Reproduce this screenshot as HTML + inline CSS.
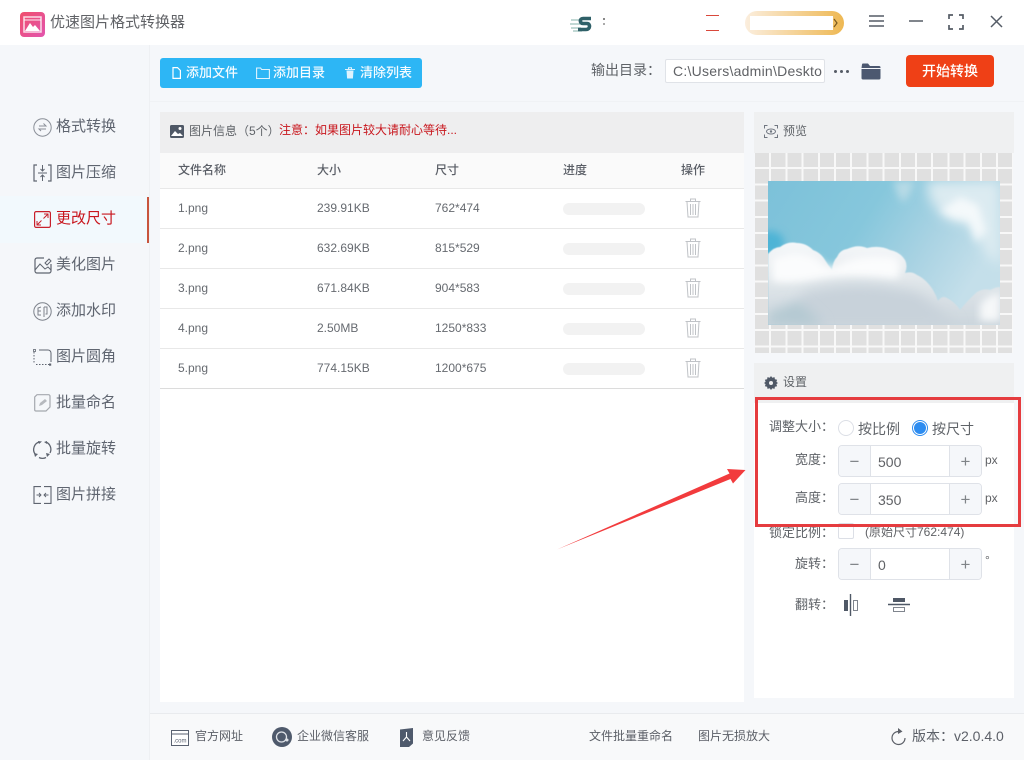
<!DOCTYPE html>
<html lang="zh-CN"><head><meta charset="utf-8"><title>优速图片格式转换器</title>
<style>
*{box-sizing:border-box;margin:0;padding:0}
html,body{width:1024px;height:760px;overflow:hidden;background:#f5f7fa}
body{position:relative;font-family:"Liberation Sans","Noto Sans CJK SC",sans-serif;color:#606266}
.a{position:absolute}
.t{position:absolute;white-space:nowrap;line-height:20px}
svg{position:absolute;overflow:visible}
.nav{font-size:15px;left:56px;color:#5f6570}
.th{font-size:12px;color:#5a5e66;font-weight:500}
.td{font-size:12px;color:#666a70}
.bar{position:absolute;left:563px;width:82px;height:12px;background:#f2f2f2;border-radius:6px}
.line{position:absolute;left:160px;width:584px;height:1px;background:#e8e8e8}
.lb{font-size:13px;color:#5f6368}
.l4{left:769px}.l2{left:795px}
.spin{position:absolute;left:838px;width:144px;height:32px;border:1px solid #dfe2e8;border-radius:4px;background:#fff;overflow:hidden}
.spin i{position:absolute;top:0;width:32px;height:30px;background:#f5f7fa;font-style:normal;text-align:center;line-height:31px;font-size:17px;color:#808488}
.spin i.m{left:0;border-right:1px solid #dfe2e8}
.spin i.p{right:0;border-left:1px solid #dfe2e8}
.spin b{position:absolute;left:39px;top:6px;font-weight:400;font-size:14px;line-height:20px;color:#606266}
.ft{font-size:12px;color:#5c6068}
</style></head><body>

<!-- title bar -->
<div class="a" style="left:0;top:0;width:1024px;height:45px;background:#fff"></div>
<div class="a" style="left:20px;top:12px;width:25px;height:25px;border-radius:4px;background:linear-gradient(135deg,#f04e6c,#e255ae)"></div>
<svg style="left:20px;top:12px" width="25" height="25" viewBox="0 0 25 25"><rect x="4" y="5" width="17" height="15" fill="none" stroke="#fff" stroke-width="1.5" opacity=".8"/><path d="M4 8h17" stroke="#fff" stroke-width="1.5" opacity=".6"/><path d="M5 19l5-8 3 4 2-2 5 6z" fill="#fff"/></svg>
<div class="t" style="left:50px;top:13px;font-size:15px;color:#606266">优速图片格式转换器</div>

<svg style="left:570px;top:15px" width="24" height="18" viewBox="0 0 24 18"><path d="M1 5h9M0 9h10M1 13h10M3 16h9" stroke="#9cc0bb" stroke-width="1.200"/><path d="M21 3.500H13c-3.500 0-3.500 5 0 5h4c3.500 0 3.500 6-1 6H8" fill="none" stroke="#2f6068" stroke-width="3.600"/></svg>
<div class="a" style="left:603px;top:18px;width:2px;height:2px;background:#888"></div>
<div class="a" style="left:603px;top:23px;width:2px;height:2px;background:#aaa"></div>
<div class="a" style="left:706px;top:15px;width:13px;height:1px;background:#d9483b"></div>
<div class="a" style="left:706px;top:30px;width:13px;height:1px;background:#d9483b"></div>
<div class="a" style="left:745px;top:11px;width:99px;height:24px;border-radius:12px;background:linear-gradient(90deg,#fbeede,#eeb853)"></div>
<div class="a" style="left:750px;top:16px;width:83px;height:14px;background:#fff"></div>
<svg style="left:833px;top:18px" width="5" height="10" viewBox="0 0 5 10"><path d="M1 1l3 4-3 4" fill="none" stroke="#7a5a20" stroke-width="1.200"/></svg>
<svg style="left:869px;top:15px" width="16" height="12" viewBox="0 0 16 12"><path d="M0 1h15M0 6h15M0 11h15" stroke="#555c66" stroke-width="1.500"/></svg>
<svg style="left:909px;top:20px" width="14" height="2"><path d="M0 1h14" stroke="#555c66" stroke-width="1.500"/></svg>
<svg style="left:948px;top:14px" width="16" height="16" viewBox="0 0 16 16"><path d="M1 5V1h4M11 1h4v4M15 11v4h-4M5 15H1v-4" fill="none" stroke="#555c66" stroke-width="1.700"/></svg>
<svg style="left:990px;top:15px" width="13" height="13" viewBox="0 0 13 13"><path d="M1 1l11 11M12 1L1 12" stroke="#555c66" stroke-width="1.500"/></svg>

<!-- sidebar -->
<div class="a" style="left:149px;top:45px;width:1px;height:715px;background:#eef0f3"></div>
<div class="a" style="left:0;top:196px;width:149px;height:47px;background:#f2f9fd"></div>
<div class="a" style="left:147px;top:197px;width:2px;height:46px;background:#c8553d"></div>

<svg style="left:33px;top:118px" width="19" height="19" viewBox="0 0 19 19"><circle cx="9.500" cy="9.500" r="8.700" fill="none" stroke="#8a8f98"/><path d="M6 8h7L10.500 5.500M13 11H6L8 13" fill="none" stroke="#8a8f98"/></svg>
<div class="t nav" style="top:117px">格式转换</div>
<svg style="left:33px;top:164px" width="19" height="18" viewBox="0 0 19 18"><path d="M4 1H1v16h3M15 1h3v16h-3" fill="none" stroke="#5f6570" stroke-width="1.200"/><path d="M9.500 1v6M7.500 5l2 2 2-2M9.500 17v-6M7.500 13l2-2 2 2M5 9h9" fill="none" stroke="#5f6570"/></svg>
<div class="t nav" style="top:163px">图片压缩</div>
<svg style="left:34px;top:211px" width="17" height="17" viewBox="0 0 17 17"><rect x=".6" y=".6" width="15.800" height="15.800" rx="1.500" fill="none" stroke="#c8202c" stroke-width="1.200"/><path d="M10 3h4v4M14 3L9.500 7.500M7 14H3v-4M3 14l4.500-4.500" fill="none" stroke="#c8202c"/></svg>
<div class="t nav" style="top:209px;color:#c8161d">更改尺寸</div>
<svg style="left:34px;top:257px" width="18" height="17" viewBox="0 0 18 17"><path d="M10 1H3a2 2 0 0 0-2 2v11a2 2 0 0 0 2 2h12a2 2 0 0 0 2-2V7" fill="none" stroke="#5f6570" stroke-width="1.200"/><path d="M1 13l5-6 5 5 3-2 3 3M11 6l4-4 2 2-4 4z" fill="none" stroke="#5f6570"/></svg>
<div class="t nav" style="top:255px">美化图片</div>
<svg style="left:33px;top:302px" width="19" height="19" viewBox="0 0 19 19"><circle cx="9.500" cy="9.500" r="8.700" fill="none" stroke="#7d828b"/><path d="M8 5L5 6v7h3M5 9h3M11 5h3v7h-1.500M11 5v10" fill="none" stroke="#7d828b"/></svg>
<div class="t nav" style="top:301px">添加水印</div>
<svg style="left:33px;top:349px" width="19" height="17" viewBox="0 0 19 17"><path d="M1 3v12" stroke="#5f6570" stroke-dasharray="1.500 1.500"/><path d="M3 15.500h13" stroke="#5f6570" stroke-dasharray="1.500 1.500"/><path d="M6 1h9a3 3 0 0 1 3 3v9" fill="none" stroke="#5f6570"/><rect x=".5" y=".5" width="2" height="2" fill="none" stroke="#5f6570" stroke-width=".8"/><rect x="16" y="14.500" width="2.200" height="2.200" fill="#5f6570"/></svg>
<div class="t nav" style="top:347px">图片圆角</div>
<svg style="left:34px;top:394px" width="17" height="18" viewBox="0 0 17 18"><path d="M3 .7h11.500a1.500 1.500 0 0 1 1.500 1.500V13l-4 4H2a1.300 1.300 0 0 1-1.300-1.300V3z" fill="none" stroke="#a5a8ae" stroke-width="1.200"/><path d="M5 12l1-3 5-4 2 2-5 4z" fill="#b6b9be"/></svg>
<div class="t nav" style="top:393px">批量命名</div>
<svg style="left:33px;top:440px" width="19" height="19" viewBox="0 0 19 19"><path d="M6 2A8 8 0 0 0 2 14M6 17.500a8 8 0 0 0 7 0M17 13A8 8 0 0 0 13 2" fill="none" stroke="#5f6570" stroke-width="1.300"/><path d="M5 1l4 .5L6 4zM1 13l4 1-3 3zM14 17l-1-4 4 1zM14 1v3l-3-2z" fill="#5f6570"/></svg>
<div class="t nav" style="top:439px">批量旋转</div>
<svg style="left:33px;top:486px" width="19" height="18" viewBox="0 0 19 18"><path d="M8 .6H1v16.800h7M11 .6h7v16.800h-7" fill="none" stroke="#5f6570" stroke-width="1.100"/><path d="M3.500 9H8M6 7l2 2-2 2M15.500 9H11M13 7l-2 2 2 2" fill="none" stroke="#5f6570" stroke-width=".9"/></svg>
<div class="t nav" style="top:485px">图片拼接</div>

<!-- toolbar -->
<div class="a" style="left:150px;top:101px;width:874px;height:1px;background:#f0f2f5"></div>
<div class="a" style="left:160px;top:58px;width:262px;height:30px;background:#2db6f5;border-radius:3px"></div>
<svg style="left:172px;top:67px" width="9" height="12" viewBox="0 0 9 12"><path d="M1 .6h4.500L8.400 3.500V11.400H1z" fill="none" stroke="#fff" stroke-width="1.200"/></svg>
<div class="t" style="left:186px;top:63px;font-size:13px;color:#f4fbff;font-weight:500">添加文件</div>
<svg style="left:256px;top:67px" width="14" height="12" viewBox="0 0 14 12"><path d="M.6 1h4l1 1.500h7.800v9H.6z" fill="none" stroke="#dff3fe" stroke-width="1.100"/></svg>
<div class="t" style="left:273px;top:63px;font-size:13px;color:#f4fbff;font-weight:500">添加目录</div>
<svg style="left:345px;top:67px" width="10" height="12" viewBox="0 0 10 12"><path d="M0 2.500h10M3.500 2V.8h3V2" stroke="#dff3fe" fill="none"/><path d="M1.500 3.500h7l-.6 8H2.100z" fill="#dff3fe"/></svg>
<div class="t" style="left:360px;top:63px;font-size:13px;color:#f4fbff;font-weight:500">清除列表</div>

<div class="t" style="left:591px;top:60px;font-size:14px;color:#5f6368">输出目录：</div>
<div class="a" style="left:665px;top:59px;width:160px;height:24px;background:#fff;border:1px solid #e0e3e8;border-radius:2px"></div>
<div class="t" style="left:673px;top:61px;font-size:14px;color:#606266;letter-spacing:.25px">C:\Users\admin\Deskto</div>
<div class="a" style="left:834px;top:70px;width:3px;height:3px;border-radius:50%;background:#555c66;box-shadow:6px 0 #555c66,12px 0 #555c66"></div>
<svg style="left:861px;top:63px" width="20" height="17" viewBox="0 0 20 17"><path d="M1 1.500a1 1 0 0 1 1-1h5l2 2.500h9a1.500 1.500 0 0 1 1.500 1.500V5H.5z" fill="#4c5870"/><path d="M.5 6h19v9a1.500 1.500 0 0 1-1.500 1.500H2A1.500 1.500 0 0 1 .5 15z" fill="#4c5870"/></svg>
<div class="a" style="left:906px;top:55px;width:88px;height:32px;background:#ef4016;border-radius:4px"></div>
<div class="t" style="left:922px;top:61px;font-size:14px;color:#fff;font-weight:500">开始转换</div>

<!-- list panel -->
<div class="a" style="left:160px;top:112px;width:584px;height:41px;background:#eeeeef"></div>
<svg style="left:170px;top:125px" width="14" height="13" viewBox="0 0 14 13"><rect width="14" height="13" rx="1.500" fill="#4f5866"/><circle cx="10" cy="3.500" r="1.500" fill="#fff"/><path d="M1 11l4-5 3 3 2-1 3 3z" fill="#fff"/></svg>
<div class="t" style="left:189px;top:121px;font-size:12px;color:#5f6368">图片信息（5个）</div>
<div class="t" style="left:279px;top:120px;font-size:12px;color:#c8161d">注意：如果图片较大请耐心等待...</div>
<div class="a" style="left:160px;top:153px;width:584px;height:35px;background:#fafafa"></div>
<div class="a" style="left:160px;top:188px;width:584px;height:514px;background:#fff"></div>
<div class="line" style="top:188px"></div><div class="line" style="top:228px"></div><div class="line" style="top:268px"></div><div class="line" style="top:308px"></div><div class="line" style="top:348px"></div><div class="line" style="top:388px;background:#dcdcdc"></div>
<div class="t th" style="left:178px;top:160px">文件名称</div><div class="t th" style="left:317px;top:160px">大小</div><div class="t th" style="left:435px;top:160px">尺寸</div><div class="t th" style="left:563px;top:160px">进度</div><div class="t th" style="left:681px;top:160px">操作</div>

<div class="t td" style="left:178px;top:198px">1.png</div><div class="t td" style="left:317px;top:198px">239.91KB</div><div class="t td" style="left:435px;top:198px">762*474</div><div class="bar" style="top:203px"></div>
<div class="t td" style="left:178px;top:238px">2.png</div><div class="t td" style="left:317px;top:238px">632.69KB</div><div class="t td" style="left:435px;top:238px">815*529</div><div class="bar" style="top:243px"></div>
<div class="t td" style="left:178px;top:278px">3.png</div><div class="t td" style="left:317px;top:278px">671.84KB</div><div class="t td" style="left:435px;top:278px">904*583</div><div class="bar" style="top:283px"></div>
<div class="t td" style="left:178px;top:318px">4.png</div><div class="t td" style="left:317px;top:318px">2.50MB</div><div class="t td" style="left:435px;top:318px">1250*833</div><div class="bar" style="top:323px"></div>
<div class="t td" style="left:178px;top:358px">5.png</div><div class="t td" style="left:317px;top:358px">774.15KB</div><div class="t td" style="left:435px;top:358px">1200*675</div><div class="bar" style="top:363px"></div>

<svg style="left:685px;top:198px" width="16" height="20" viewBox="0 0 16 20"><path d="M.5 3.500h15M5.500 3V1h5v2M2 4l1 15h10l1-15M5.500 6v11M8 6v11M10.500 6v11" fill="none" stroke="#c0c3c7"/></svg>
<svg style="left:685px;top:238px" width="16" height="20" viewBox="0 0 16 20"><path d="M.5 3.500h15M5.500 3V1h5v2M2 4l1 15h10l1-15M5.500 6v11M8 6v11M10.500 6v11" fill="none" stroke="#c0c3c7"/></svg>
<svg style="left:685px;top:278px" width="16" height="20" viewBox="0 0 16 20"><path d="M.5 3.500h15M5.500 3V1h5v2M2 4l1 15h10l1-15M5.500 6v11M8 6v11M10.500 6v11" fill="none" stroke="#c0c3c7"/></svg>
<svg style="left:685px;top:318px" width="16" height="20" viewBox="0 0 16 20"><path d="M.5 3.500h15M5.500 3V1h5v2M2 4l1 15h10l1-15M5.500 6v11M8 6v11M10.500 6v11" fill="none" stroke="#c0c3c7"/></svg>
<svg style="left:685px;top:358px" width="16" height="20" viewBox="0 0 16 20"><path d="M.5 3.500h15M5.500 3V1h5v2M2 4l1 15h10l1-15M5.500 6v11M8 6v11M10.500 6v11" fill="none" stroke="#c0c3c7"/></svg>

<!-- preview -->
<div class="a" style="left:754px;top:112px;width:260px;height:41px;background:#eff0f1"></div>
<svg style="left:764px;top:125px" width="14" height="13" viewBox="0 0 14 13"><path d="M3.500.5h-3v3M10.500.5h3v3M13.500 9.500v3h-3M3.500 12.500h-3v-3" fill="none" stroke="#707680"/><ellipse cx="7" cy="6.500" rx="4.500" ry="2.500" fill="none" stroke="#707680"/><circle cx="7" cy="6.500" r="1.200" fill="#707680"/></svg>
<div class="t" style="left:783px;top:121px;font-size:12px;color:#5f6368">预览</div>
<div class="a" style="left:754.500px;top:153px;width:258px;height:200px;background-color:#e0e0e0;background-image:repeating-linear-gradient(90deg,transparent 0,transparent 14.200px,#f8f8f8 14.200px,#f8f8f8 16.200px),repeating-linear-gradient(180deg,transparent 0,transparent 14.200px,#f8f8f8 14.200px,#f8f8f8 16.200px)"></div>
<svg style="left:768px;top:181px" width="232" height="144" viewBox="0 0 232 144">
<defs>
<linearGradient id="sky" x1="0" y1="0" x2="1" y2="0.4"><stop offset="0" stop-color="#7cc1d9"/><stop offset=".45" stop-color="#86c7dc"/><stop offset=".75" stop-color="#aad3e3"/><stop offset="1" stop-color="#c4dfea"/></linearGradient>
<linearGradient id="cl" x1="0" y1="0" x2="0" y2="1"><stop offset="0" stop-color="#f6f8fa"/><stop offset=".5" stop-color="#dfe5e9"/><stop offset="1" stop-color="#ccd6dd"/></linearGradient>
<filter id="b3" x="-30%" y="-30%" width="160%" height="160%"><feGaussianBlur stdDeviation="4"/></filter><filter id="b6" x="-40%" y="-40%" width="180%" height="180%"><feGaussianBlur stdDeviation="6"/></filter><filter id="b1"><feGaussianBlur stdDeviation=".6"/></filter>
<clipPath id="c"><rect width="232" height="144"/></clipPath>
</defs>
<g clip-path="url(#c)">
<rect width="232" height="144" fill="url(#sky)"/>
<ellipse cx="2" cy="62" rx="14" ry="12" fill="#4db4d6" filter="url(#b3)"/>
<path d="M158 0h74v85l-14-12-14-28-28-8-14-18z" fill="#dcebf1" filter="url(#b6)"/>
<path d="M172 30l20-14 18 8 8 26-10 12-8-22-14-2z" fill="#fff" opacity=".7" filter="url(#b3)"/>
<path d="M125 0h22l-6 14-6 8-5-8z" fill="#c9e2ea" opacity=".7" filter="url(#b3)"/>
<path d="M0 73Q6 66 12 66Q20 60 29 62Q38 62 45 69Q53 72 57 79Q60 84 64 89Q65 80 69 76Q72 69 79 68Q90 63 99 67Q112 64 122 69Q132 71 137 79Q140 85 137 92Q144 90 149 94Q158 98 165 109Q168 114 170 120Q174 114 179 117Q187 121 192 129Q199 120 209 111Q216 107 222 109Q228 106 232 106V144H0z" fill="url(#cl)" filter="url(#b1)"/>
<path d="M4 78Q28 66 50 78Q62 90 70 84Q90 72 128 76Q136 88 128 98Q80 92 50 98Q20 104 4 100z" fill="#fbfcfd" filter="url(#b3)"/>
<path d="M212 124Q218 114 232 112V140H212z" fill="#f6f8f9" filter="url(#b3)"/>
<path d="M35 112Q90 96 150 112L190 144H20z" fill="#c8d2da" filter="url(#b6)"/>
<path d="M0 132L30 120 56 144H0z" fill="#b4c9d2" filter="url(#b6)"/>
</g></svg>

<!-- settings -->
<div class="a" style="left:754px;top:363px;width:260px;height:335px;background:#fff"></div>
<div class="a" style="left:754px;top:363px;width:260px;height:40px;background:#eff0f1"></div>
<svg style="left:764px;top:376px" width="14" height="14" viewBox="0 0 14 14"><path d="M7 0l1.300 1.800 2.200-.7.400 2.200 2.200.4-.7 2.200L14 7l-1.600 1.100.7 2.200-2.200.4-.4 2.200-2.200-.7L7 14l-1.300-1.800-2.200.7-.4-2.200-2.200-.4.7-2.200L0 7l1.600-1.100-.7-2.200 2.200-.4.4-2.200 2.200.7z" fill="#4f5866"/><circle cx="7" cy="7" r="2" fill="#eff0f1"/></svg>
<div class="t" style="left:783px;top:372px;font-size:12px;color:#5f6368">设置</div>

<div class="t lb l4" style="top:417px">调整大小：</div>
<div class="a" style="left:838px;top:420px;width:16px;height:16px;border-radius:50%;border:1px solid #dcdfe6;background:#fff"></div>
<div class="t" style="left:858px;top:419px;font-size:14px;color:#5f6368">按比例</div>
<div class="a" style="left:912px;top:420px;width:16px;height:16px;border-radius:50%;border:1px solid #2d8cf0;background:#fff"></div>
<div class="a" style="left:914px;top:422px;width:12px;height:12px;border-radius:50%;background:#2d8cf0"></div>
<div class="t" style="left:932px;top:419px;font-size:14px;color:#5f6368">按尺寸</div>

<div class="t lb l2" style="top:450px">宽度：</div>
<div class="spin" style="top:445px"><i class="m">−</i><b>500</b><i class="p">+</i></div>
<div class="t" style="left:985px;top:450px;font-size:12px;color:#606266">px</div>
<div class="t lb l2" style="top:488px">高度：</div>
<div class="spin" style="top:483px"><i class="m">−</i><b>350</b><i class="p">+</i></div>
<div class="t" style="left:985px;top:488px;font-size:12px;color:#606266">px</div>

<div class="t lb l4" style="top:523px">锁定比例：</div>
<div class="a" style="left:838px;top:523px;width:16px;height:16px;border:1px solid #dcdfe6;border-radius:2px;background:#fff"></div>
<div class="t" style="left:865px;top:522px;font-size:12px;color:#606266">(原始尺寸762:474)</div>
<div class="t lb l2" style="top:554px">旋转：</div>
<div class="spin" style="top:548px"><i class="m">−</i><b>0</b><i class="p">+</i></div>
<div class="t" style="left:985px;top:550px;font-size:12px;color:#606266">°</div>
<div class="t lb l2" style="top:595px">翻转：</div>
<svg style="left:843px;top:594px" width="16" height="22" viewBox="0 0 16 22"><rect x="1" y="6" width="4" height="11" fill="#4f5866"/><path d="M7.500 0v22" stroke="#4f5866" stroke-width="1.400"/><rect x="10.500" y="6.500" width="4" height="10" fill="none" stroke="#80858e"/></svg>
<svg style="left:888px;top:597px" width="22" height="16" viewBox="0 0 22 16"><rect x="5" y="1" width="12" height="4" fill="#4f5866"/><path d="M0 7.500h22" stroke="#4f5866" stroke-width="1.400"/><rect x="5.500" y="10.500" width="11" height="4" fill="none" stroke="#80858e"/></svg>

<!-- red annotation -->
<div class="a" style="left:755px;top:397px;width:266px;height:130px;border:3px solid #e53c3f"></div>
<svg style="left:0;top:0" width="1024" height="760"><path d="M557 549.500L729.500 473.500 727 469 745.500 470 733 483.500 730.500 479z" fill="#f23b3d"/></svg>

<!-- footer -->
<div class="a" style="left:150px;top:713px;width:874px;height:1px;background:#e9ebee"></div>
<div class="a" style="left:150px;top:714px;width:874px;height:46px;background:#f8f9fa"></div>
<svg style="left:171px;top:730px" width="18" height="16" viewBox="0 0 18 16"><rect x=".5" y=".5" width="17" height="15" fill="#fff" stroke="#596170"/><path d="M.5 4h17" stroke="#596170"/><text x="9" y="12.500" font-size="6" text-anchor="middle" fill="#596170" font-family="Liberation Sans">.com</text></svg>
<div class="t ft" style="left:195px;top:726px">官方网址</div>
<svg style="left:272px;top:727px" width="20" height="20" viewBox="0 0 20 20"><circle cx="10" cy="10" r="10" fill="#4f5a6c"/><circle cx="9.500" cy="10" r="5" fill="none" stroke="#dfe3e8" stroke-width="1.300"/><circle cx="15" cy="13" r="1.500" fill="#dfe3e8"/></svg>
<div class="t ft" style="left:297px;top:726px">企业微信客服</div>
<svg style="left:400px;top:728px" width="13" height="19" viewBox="0 0 13 19"><path d="M0 1.500L13 0v15.500L9 19H0z" fill="#4f5a6c"/><path d="M6.500 4v5M3 13l3.500-4 3.500 4" fill="none" stroke="#fff" stroke-width="1.100"/></svg>
<div class="t ft" style="left:422px;top:726px">意见反馈</div>
<div class="t ft" style="left:589px;top:726px">文件批量重命名</div>
<div class="t ft" style="left:698px;top:726px">图片无损放大</div>
<svg style="left:891px;top:728px" width="15" height="19" viewBox="0 0 15 19"><path d="M8 3.500a6.500 6.500 0 1 0 6 6.500" fill="none" stroke="#5c6068" stroke-width="1.200"/><path d="M7 0l4.500 3.500L7 6z" fill="#5c6068"/></svg>
<div class="t" style="left:912px;top:726px;font-size:14px;color:#5c6068">版本：v2.0.4.0</div>
</body></html>
